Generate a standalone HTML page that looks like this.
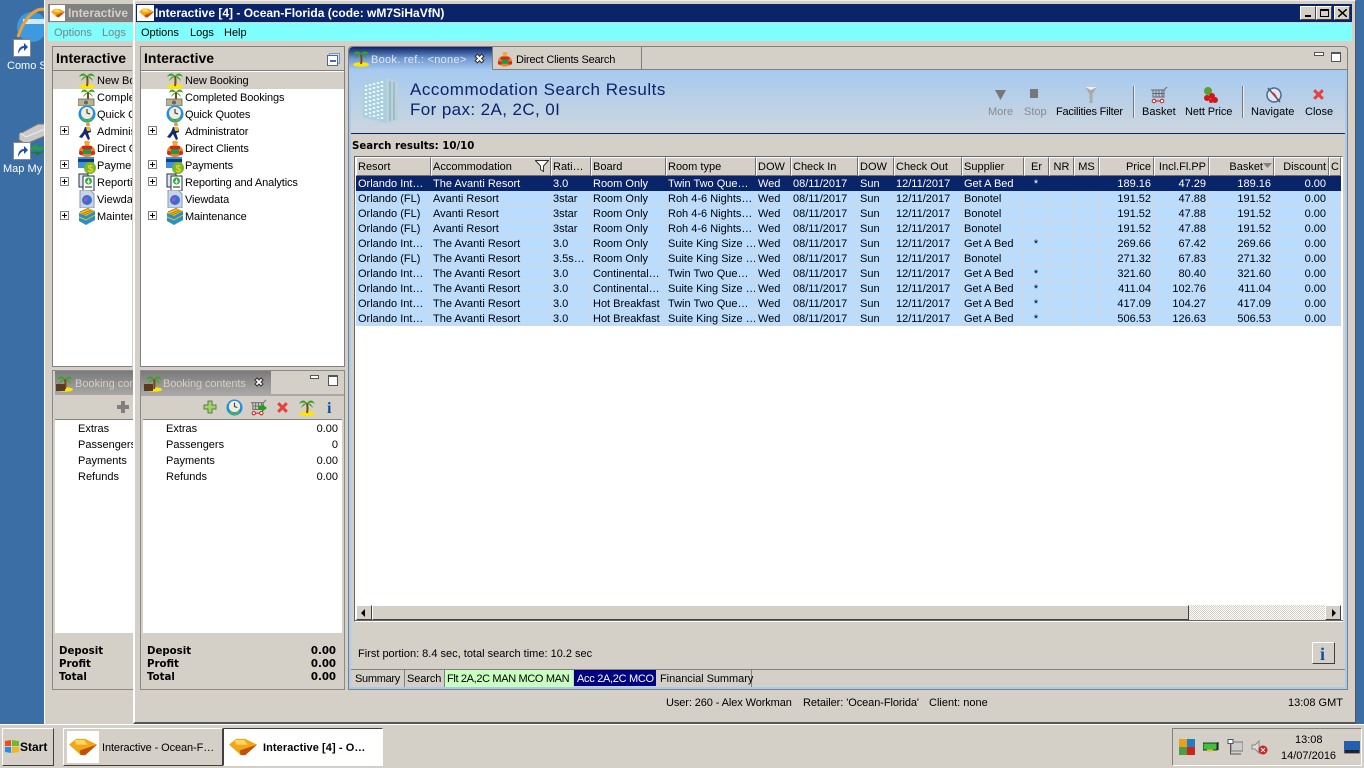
<!DOCTYPE html>
<html><head><meta charset="utf-8"><title>Interactive</title>
<style>
html,body{margin:0;padding:0;width:1364px;height:768px;overflow:hidden;background:#3a6ea5;font:11px "Liberation Sans",sans-serif;color:#000}
div,span,svg{position:absolute}
.t{white-space:nowrap;line-height:14px}
.g{background:#d4d0c8}
.raised{background:#d4d0c8;border:1px solid;border-color:#fff #404040 #404040 #fff;box-sizing:border-box}
table{position:absolute;left:356px;top:157px;border-collapse:separate;border-spacing:0;table-layout:fixed;width:985px;font:11px "Liberation Sans",sans-serif}
th{height:19px;box-sizing:border-box;background:#d4d0c8;border:1px solid;border-color:#fff #6f6f6f #6f6f6f #fff;font-weight:normal;text-align:left;padding:1px 1px 0;white-space:nowrap;overflow:hidden}
td{height:15px;box-sizing:border-box;padding:2px 2px 0;background:#b9dcff;border-right:1px solid #d4d6d8;border-bottom:1px solid #d4d6d8;white-space:nowrap;overflow:hidden;line-height:12px}
tr.s td{background:#0a246a;color:#fff;border-color:#0a246a}
.r{text-align:right;padding-right:2px}
.c{text-align:center}
.b{font-family:"DejaVu Sans",sans-serif;font-weight:bold;font-size:10.2px}
.tr{letter-spacing:-.12px}
</style></head><body>
<svg width="0" height="0" style="left:0;top:0"><defs>
<symbol id="palm" viewBox="0 0 18 18"><ellipse cx="9" cy="15.5" rx="8" ry="2.3" fill="#ffe600"/><path d="M9 15C10 11 9.500 8 9 5" stroke="#7a4a10" stroke-width="2" fill="none"/><path d="M9 5C6 1 3 2 1 6 4 4 6 5 9 5ZM9 5C12 1 15 2 17 6 14 4 12 5 9 5ZM9 5C6 5 4 7 3 10 5 8 7 7 9 5ZM9 5C12 5 14 7 15 10 13 8 11 7 9 5Z" fill="#3fa02c"/></symbol>
<symbol id="cash" viewBox="0 0 18 18"><path d="M10 11C10 8 10 6 10 4" stroke="#7a4a10" stroke-width="2"/><path d="M10 4C7 0 4 1 3 5 5 3 7 4 10 4ZM10 4C13 0 16 1 17 5 15 3 13 4 10 4ZM10 4C8 5 6 6 5 9 7 7 9 6 10 4ZM10 4C12 5 14 6 15 9 13 7 11 6 10 4Z" fill="#3fa02c"/><rect x="0" y="11" width="16" height="7" fill="#b9b48e" stroke="#555" stroke-width=".7"/><circle cx="8" cy="14.500" r="2" fill="#666"/></symbol>
<symbol id="clock" viewBox="0 0 18 18"><circle cx="9" cy="9" r="8.500" fill="#1d8ee0"/><circle cx="9" cy="8" r="6" fill="#f1ece0"/><path d="M9 4V8L12 9" stroke="#444" stroke-width="1.200" fill="none"/><path d="M3 13C6 18 12 18 15 13L12 13 9 16 6 13Z" fill="#58b82c"/></symbol>
<symbol id="run" viewBox="0 0 18 18"><circle cx="10" cy="2.500" r="2" fill="#d9a05b"/><path d="M7 5H12L13 10 10 11 12 17 10 18 7 12 4 16 1 15 5 10Z" fill="#14266e"/><path d="M8 5H12L12 9H9Z" fill="#e8c020"/></symbol>
<symbol id="clown" viewBox="0 0 18 18"><path d="M6 4C6 1 12 1 12 4Z" fill="#f0a020"/><circle cx="9" cy="4.500" r="2.500" fill="#f4a83a"/><ellipse cx="9" cy="12" rx="8" ry="6" fill="#f08020"/><rect x="5" y="8" width="8" height="7" fill="#1c9c40"/><rect x="4" y="7" width="10" height="3" fill="#e02020"/><circle cx="3" cy="14" r="2" fill="#e02020"/><circle cx="15" cy="14" r="2" fill="#e02020"/></symbol>
<symbol id="card" viewBox="0 0 18 18"><rect x="0" y="1" width="16" height="11" fill="#3f8fdc"/><rect x="0" y="3" width="16" height="3" fill="#123c7c"/><circle cx="12" cy="12" r="6" fill="#79b82c"/><text x="9.500" y="16" font-family="Liberation Sans" font-weight="bold" font-size="10" fill="#f0d020">$</text></symbol>
<symbol id="report" viewBox="0 0 18 18"><rect x="1" y="1" width="9" height="13" fill="#dfe6ec" stroke="#234" stroke-width="1"/><rect x="5" y="3" width="11" height="15" fill="#fff" stroke="#234" stroke-width="1"/><circle cx="10.500" cy="8" r="3.500" fill="#2fb12f"/><path d="M10.500 6V9M9 8L10.500 10 12 8" stroke="#fff" fill="none"/><path d="M7 14H14" stroke="#222"/></symbol>
<symbol id="view" viewBox="0 0 18 18"><path d="M2 0H12L16 4V18H2Z" fill="#c9d4e6" stroke="#8c97ad"/><circle cx="9" cy="10" r="5" fill="#3a6cd4"/><path d="M6 8L10 7 9 11 6 12Z" fill="#9b5bc2"/></symbol>
<symbol id="maint" viewBox="0 0 18 18"><path d="M1 6L10 1 17 4V13L8 18 1 14Z" fill="#2a90c8"/><path d="M1 6L10 1 17 4 8 9Z" fill="#f0c020"/><path d="M2 5L11 1M4 7L13 3M6 8L15 4" stroke="#a87010" stroke-width=".8"/><path d="M1 10L8 13 17 8" stroke="#f0c020" fill="none"/></symbol>
<symbol id="logo" viewBox="0 0 24 16"><path d="M0 6L6 1H14L24 6 14 15H10Z" fill="#f0a818"/><path d="M5 2H13L16 6H6Z" fill="#fcd860"/><path d="M9 11L24 6 14 15H10Z" fill="#c0500f"/></symbol>
<symbol id="x" viewBox="0 0 14 14"><path d="M2 4L4 2 7 5 10 2 12 4 9 7 12 10 10 12 7 9 4 12 2 10 5 7Z" fill="#e84040"/></symbol>
<symbol id="plus" viewBox="0 0 14 14"><path d="M5 1H9V5H13V9H9V13H5V9H1V5H5Z" fill="#a8d060" stroke="#508050" stroke-width="1"/></symbol>
<symbol id="pm" viewBox="0 0 9 9"><rect x=".5" y=".5" width="8" height="8" fill="#fff" stroke="#808080"/><path d="M2 4.500H7M4.500 2V7" stroke="#000"/></symbol>
<symbol id="basket" viewBox="0 0 18 18"><path d="M1 4H14L17 1M3 4V11H14V4M6 4V11M9 4V11M12 4V11M3 7.500H14" stroke="#666" fill="none"/><circle cx="4" cy="15" r="1.800" fill="#fff" stroke="#d01818"/><circle cx="12" cy="15" r="1.800" fill="#fff" stroke="#d01818"/><path d="M5.800 15H10.200" stroke="#d01818"/></symbol>
</defs></svg>

<!-- Desktop icons -->
<svg style="left:14px;top:6px" width="31" height="36" viewBox="0 0 31 36"><circle cx="18" cy="21" r="15" fill="#3d9ae0"/><path d="M9 18H30V13H9Z" fill="#cfe8fa"/><path d="M4 31C10 12 22 0 32 4" stroke="#f0a030" stroke-width="3" fill="none"/></svg>
<div style="left:13px;top:39px;width:16px;height:16px;background:#fff;border:1px solid #888"><svg style="left:1px;top:1px" width="14" height="14" viewBox="0 0 14 14"><path d="M3 13C3 7 6 5 9 5V2L13 6 9 10V7C7 7 5 9 3 13Z" fill="#1f4fa8"/></svg></div>
<div class="t" style="left:7px;top:59px;color:#fff">Como S</div>
<svg style="left:18px;top:122px" width="27" height="24" viewBox="0 0 27 24"><path d="M1 12L20 2H27V14L8 22 1 18Z" fill="#c9c9c9" stroke="#777"/><path d="M2 11L8 15 27 7" stroke="#eee" fill="none"/></svg>
<svg style="left:28px;top:144px" width="17" height="12" viewBox="0 0 17 12"><path d="M0 5L9 0V3H17V6H5Z" fill="#20a040"/><path d="M17 7L8 12V9H0V8H12Z" fill="#128030"/></svg>
<div style="left:13px;top:142px;width:16px;height:16px;background:#fff;border:1px solid #888"><svg style="left:1px;top:1px" width="14" height="14" viewBox="0 0 14 14"><path d="M3 13C3 7 6 5 9 5V2L13 6 9 10V7C7 7 5 9 3 13Z" fill="#1f4fa8"/></svg></div>
<div class="t" style="left:3px;top:162px;color:#fff">Map My</div>

<!-- Window A (behind) -->
<div class="g" style="left:44px;top:0;width:90px;height:724px;border-left:1px solid #fff;box-sizing:border-box;overflow:hidden">
  <div style="left:3px;top:4px;width:90px;height:18px;background:#808080"></div>
  <div style="left:3px;top:23px;width:90px;height:18px;background:#80ffff"></div>
  <div style="left:5px;top:5px;width:15px;height:16px;background:#fff"><svg style="left:1px;top:3px" width="14" height="10"><use href="#logo"/></svg></div>
  <div class="t" style="left:23px;top:6px;color:#d4d0c8;font-weight:bold;font-size:12px">Interactive</div>
  <div class="t" style="left:9px;top:26px;color:#808080">Options</div><div class="t" style="left:57px;top:26px;color:#808080">Logs</div>
</div>
<div style="left:52px;top:46px;width:80px;height:321px;overflow:hidden;background:#d4d0c8;border:solid #808080;border-width:1px 0 1px 1px;box-sizing:border-box">
  <div style="left:0;top:23px;width:80px;height:1px;background:#808080"></div>
  <div class="t" style="left:3px;top:4px;font-weight:bold;font-size:14px">Interactive</div>
  <div style="left:0;top:25px;width:80px;height:295px;background:#fff"></div>
  <div style="left:0;top:25px;width:80px;height:17px;background:#d4d0c8"></div>
  <svg style="left:25px;top:24px" width="18" height="18"><use href="#palm"/></svg><div class="t" style="left:44px;top:27px">New Booking</div>
  <svg style="left:25px;top:41px" width="18" height="18"><use href="#cash"/></svg><div class="t" style="left:44px;top:44px">Completed</div>
  <svg style="left:25px;top:58px" width="18" height="18"><use href="#clock"/></svg><div class="t" style="left:44px;top:61px">Quick Quotes</div>
  <svg style="left:7px;top:79px" width="9" height="9"><use href="#pm"/></svg><svg style="left:25px;top:75px" width="18" height="18"><use href="#run"/></svg><div class="t" style="left:44px;top:78px">Administrator</div>
  <svg style="left:25px;top:92px" width="18" height="18"><use href="#clown"/></svg><div class="t" style="left:44px;top:95px">Direct Clients</div>
  <svg style="left:7px;top:113px" width="9" height="9"><use href="#pm"/></svg><svg style="left:25px;top:109px" width="18" height="18"><use href="#card"/></svg><div class="t" style="left:44px;top:112px">Payments</div>
  <svg style="left:7px;top:130px" width="9" height="9"><use href="#pm"/></svg><svg style="left:25px;top:126px" width="18" height="18"><use href="#report"/></svg><div class="t" style="left:44px;top:129px">Reporting</div>
  <svg style="left:25px;top:143px" width="18" height="18"><use href="#view"/></svg><div class="t" style="left:44px;top:146px">Viewdata</div>
  <svg style="left:7px;top:164px" width="9" height="9"><use href="#pm"/></svg><svg style="left:25px;top:160px" width="18" height="18"><use href="#maint"/></svg><div class="t" style="left:44px;top:163px">Maintenance</div>
</div>
<div style="left:53px;top:371px;width:80px;height:318px;overflow:hidden;background:#d4d0c8;border-left:2px solid #d4d0c8;box-shadow:0 0 0 1px #8a8a8a;box-sizing:border-box">
  <div style="left:-2px;top:0;width:84px;height:24px;background:linear-gradient(#7a7a7a,#aaa8a6)"></div>
  <svg style="left:1px;top:3px" width="18" height="18"><use href="#palm"/></svg><div style="left:1px;top:13px;width:9px;height:7px;background:#5a3a20"></div>
  <div class="t" style="left:20px;top:6px;color:#d4d0c8">Booking contents</div>
  <svg style="left:61px;top:29px" width="14" height="14" viewBox="0 0 14 14"><path d="M5 1H9V5H13V9H9V13H5V9H1V5H5Z" fill="#808080"/></svg>
  <div style="left:0;top:48px;width:80px;height:1px;background:#808080"></div>
  <div style="left:0;top:49px;width:80px;height:213px;background:#fff"></div>
  <div class="t" style="left:23px;top:51px">Extras</div><div class="t" style="left:23px;top:67px">Passengers</div><div class="t" style="left:23px;top:83px">Payments</div><div class="t" style="left:23px;top:99px">Refunds</div>
  <div class="t b" style="left:4px;top:274px">Deposit</div><div class="t b" style="left:4px;top:287px">Profit</div><div class="t b" style="left:4px;top:300px">Total</div>
</div>

<!-- Window B -->
<div class="g" style="left:133px;top:0;width:1223px;height:724px;border-left:2px solid #fff;border-top:1px solid #eee;border-right:1px solid #555;border-bottom:2px solid #555;box-sizing:border-box"></div>
<div style="left:136px;top:4px;width:1216px;height:18px;background:#0a246a"></div>
<div style="left:136px;top:23px;width:1216px;height:18px;background:#80ffff"></div>
<div style="left:137px;top:5px;width:17px;height:16px;background:#fff"><svg style="left:2px;top:3px" width="15" height="10"><use href="#logo"/></svg></div>
<div class="t" style="left:155px;top:6px;color:#fff;font-size:12px;font-weight:bold">Interactive [4] - Ocean-Florida (code: wM7SiHaVfN)</div>
<div class="raised" style="left:1300px;top:6px;width:16px;height:14px"><div style="left:4px;top:8px;width:6px;height:2px;background:#000"></div></div>
<div class="raised" style="left:1316px;top:6px;width:16px;height:14px"><div style="left:3px;top:2px;width:9px;height:8px;border:1px solid #000;border-top-width:2px;box-sizing:border-box"></div></div>
<div class="raised" style="left:1334px;top:6px;width:16px;height:14px"><svg style="left:3px;top:2px" width="9" height="8" viewBox="0 0 9 8"><path d="M0 0L9 8M9 0L0 8" stroke="#000" stroke-width="1.500"/></svg></div>
<div class="t" style="left:141px;top:26px">Options</div><div class="t" style="left:190px;top:26px">Logs</div><div class="t" style="left:224px;top:26px">Help</div>

<!-- Tree panel B -->
<div style="left:140px;top:46px;width:205px;height:321px;background:#fff;border:1px solid #808080;box-sizing:border-box">
  <div class="g" style="left:0;top:0;width:203px;height:23px;border-bottom:1px solid #808080"></div>
  <div class="t" style="left:3px;top:4px;font-weight:bold;font-size:14px">Interactive</div>
  <svg style="left:186px;top:6px" width="13" height="13" viewBox="0 0 13 13"><rect x="2.500" y=".5" width="10" height="10" fill="#d4e4f4" stroke="#7a94b8"/><rect x=".5" y="2.500" width="10" height="10" fill="#fff" stroke="#4a6a9c"/><path d="M3 8H9" stroke="#1a3a7c" stroke-width="1.500"/></svg>
  <div class="g" style="left:0;top:25px;width:203px;height:17px"></div>
  <svg style="left:25px;top:24px" width="18" height="18"><use href="#palm"/></svg><div class="t tr" style="left:44px;top:27px">New Booking</div>
  <svg style="left:25px;top:41px" width="18" height="18"><use href="#cash"/></svg><div class="t tr" style="left:44px;top:44px">Completed Bookings</div>
  <svg style="left:25px;top:58px" width="18" height="18"><use href="#clock"/></svg><div class="t tr" style="left:44px;top:61px">Quick Quotes</div>
  <svg style="left:7px;top:79px" width="9" height="9"><use href="#pm"/></svg><svg style="left:25px;top:75px" width="18" height="18"><use href="#run"/></svg><div class="t tr" style="left:44px;top:78px">Administrator</div>
  <svg style="left:25px;top:92px" width="18" height="18"><use href="#clown"/></svg><div class="t tr" style="left:44px;top:95px">Direct Clients</div>
  <svg style="left:7px;top:113px" width="9" height="9"><use href="#pm"/></svg><svg style="left:25px;top:109px" width="18" height="18"><use href="#card"/></svg><div class="t tr" style="left:44px;top:112px">Payments</div>
  <svg style="left:7px;top:130px" width="9" height="9"><use href="#pm"/></svg><svg style="left:25px;top:126px" width="18" height="18"><use href="#report"/></svg><div class="t tr" style="left:44px;top:129px">Reporting and Analytics</div>
  <svg style="left:25px;top:143px" width="18" height="18"><use href="#view"/></svg><div class="t tr" style="left:44px;top:146px">Viewdata</div>
  <svg style="left:7px;top:164px" width="9" height="9"><use href="#pm"/></svg><svg style="left:25px;top:160px" width="18" height="18"><use href="#maint"/></svg><div class="t tr" style="left:44px;top:163px">Maintenance</div>
</div>

<!-- Booking panel B -->
<div style="left:141px;top:371px;width:203px;height:318px;background:#d4d0c8;border:solid #d4d0c8;border-width:0 2px;box-shadow:0 0 0 1px #8a8a8a;box-sizing:border-box">
  <div style="left:-2px;top:0;width:130px;height:23px;background:linear-gradient(#7a7a7a,#aaa8a6)"></div>
  <div style="left:-2px;top:23px;width:203px;height:2px;background:#aaa8a6"></div>
  <svg style="left:2px;top:3px" width="18" height="18"><use href="#palm"/></svg><div style="left:1px;top:13px;width:9px;height:7px;background:#5a3a20"></div>
  <div class="t" style="left:20px;top:6px;color:#d4d0c8;letter-spacing:-.1px">Booking contents</div>
  <svg style="left:110px;top:5px" width="12" height="12" viewBox="0 0 12 12"><path d="M2 4L4 2 6 4 8 2 10 4 8 6 10 8 8 10 6 8 4 10 2 8 4 6Z" fill="#fff" stroke="#333"/></svg>
  <div style="left:167px;top:4px;width:7px;height:2px;background:#fff;border:1px solid #555"></div>
  <div style="left:185px;top:4px;width:8px;height:8px;background:#fff;border:1px solid #555;border-top-width:2px"></div>
  <svg style="left:60px;top:29px" width="14" height="14"><use href="#plus"/></svg>
  <svg style="left:83px;top:28px" width="17" height="17"><use href="#clock"/></svg>
  <svg style="left:107px;top:28px" width="17" height="17"><use href="#basket"/></svg><svg style="left:115px;top:33px" width="9" height="8" viewBox="0 0 9 8"><path d="M0 2H4V0L9 4 4 8V6H0Z" fill="#20a020"/></svg>
  <svg style="left:132px;top:29px" width="15" height="15"><use href="#x"/></svg>
  <svg style="left:155px;top:27px" width="18" height="18"><use href="#palm"/></svg>
  <div class="t" style="left:184px;top:29px;color:#1050a0;font:bold 16px 'Liberation Serif',serif">i</div>
  <div style="left:0;top:48px;width:199px;height:1px;background:#808080"></div>
  <div style="left:0;top:49px;width:199px;height:213px;background:#fff"></div>
  <div class="t" style="left:23px;top:51px">Extras</div><div class="t" style="left:23px;top:67px">Passengers</div><div class="t" style="left:23px;top:83px">Payments</div><div class="t" style="left:23px;top:99px">Refunds</div>
  <div class="t" style="right:4px;top:51px">0.00</div><div class="t" style="right:4px;top:67px">0</div><div class="t" style="right:4px;top:83px">0.00</div><div class="t" style="right:4px;top:99px">0.00</div>
  <div class="t b" style="left:4px;top:274px">Deposit</div><div class="t b" style="left:4px;top:287px">Profit</div><div class="t b" style="left:4px;top:300px">Total</div>
  <div class="t b" style="right:6px;top:274px">0.00</div><div class="t b" style="right:6px;top:287px">0.00</div><div class="t b" style="right:6px;top:300px">0.00</div>
</div>

<!-- Main panel -->
<div style="left:348px;top:46px;width:1000px;height:644px;background:#d4d0c8;border:1px solid #808080;border-radius:4px 4px 0 0;box-sizing:border-box"></div>
<div style="left:349px;top:69px;width:998px;height:620px;border:solid #a6caf0;border-width:1px 2px 2px 2px;box-sizing:border-box"></div>
<div style="left:351px;top:70px;width:994px;height:63px;background:linear-gradient(#a6caf0,#cdd6de)"></div>
<div style="left:351px;top:133px;width:994px;height:1px;background:#0a246a"></div>
<div style="left:349px;top:47px;width:144px;height:23px;background:linear-gradient(#0a246a,#6f97cf 50%,#a6caf0);border-radius:4px 0 0 0"></div>
<div style="left:492px;top:47px;width:150px;height:23px;border:solid #808080;border-width:0 1px 1px 1px;box-sizing:border-box;background:#d4d0c8"></div>
<div style="left:642px;top:69px;width:705px;height:1px;background:#808080"></div>
<svg style="left:352px;top:49px" width="18" height="18"><use href="#palm"/></svg>
<div class="t" style="left:371px;top:53px;color:#dfe8f4;letter-spacing:.28px">Book. ref.: &lt;none&gt;</div>
<svg style="left:473px;top:52px" width="13" height="13" viewBox="0 0 12 12"><path d="M2 4L4 2 6 4 8 2 10 4 8 6 10 8 8 10 6 8 4 10 2 8 4 6Z" fill="#fff" stroke="#333"/></svg>
<svg style="left:497px;top:50px" width="16" height="17"><use href="#clown"/></svg>
<div class="t" style="left:516px;top:53px;letter-spacing:-.2px">Direct Clients Search</div>
<div style="left:1314px;top:52px;width:8px;height:2px;background:#fff;border:1px solid #555"></div>
<div style="left:1331px;top:52px;width:8px;height:7px;background:#fff;border:1px solid #555;border-top-width:2px"></div>

<svg style="left:362px;top:77px" width="37" height="47" viewBox="0 0 37 47"><path d="M1 7L24 1V46L1 40Z" fill="#a9cfe0"/><path d="M24 1L36 5V43L24 46Z" fill="#bcd2d6"/><path d="M4 8V39M8 7V40M12 6V41M16 5V42M20 4V43" stroke="#eaf6fb" stroke-width="2.500" stroke-dasharray="2 2"/><path d="M28 4V44M32 5V43" stroke="#8eb8c8" stroke-width="1.500"/></svg>
<div class="t" style="left:410px;top:80px;font-size:17px;line-height:20px;color:#0a246a;letter-spacing:.5px">Accommodation Search Results</div>
<div class="t" style="left:410px;top:100px;font-size:17px;line-height:20px;color:#0a246a;letter-spacing:.4px">For pax: 2A, 2C, 0I</div>

<svg style="left:994px;top:88px" width="13" height="13" viewBox="0 0 13 13"><path d="M1 2H12L6.500 12Z" fill="#777"/></svg>
<div style="left:1030px;top:89px;width:8px;height:9px;background:#777"></div>
<svg style="left:1084px;top:86px" width="14" height="18" viewBox="0 0 14 18"><path d="M1 1H13L8.500 8V17H5.500V8Z" fill="#aaa"/><path d="M1 1H13L7 4Z" fill="#eee"/></svg>
<svg style="left:1150px;top:86px" width="18" height="18"><use href="#basket"/></svg>
<svg style="left:1201px;top:86px" width="18" height="18" viewBox="0 0 18 18"><circle cx="7" cy="5" r="4" fill="#5aa030"/><circle cx="6" cy="12" r="3" fill="#d01818"/><circle cx="11" cy="10" r="3" fill="#d01818"/><circle cx="14" cy="14" r="3" fill="#d01818"/><circle cx="10" cy="15" r="2" fill="#d01818"/></svg>
<svg style="left:1265px;top:86px" width="18" height="18" viewBox="0 0 18 18"><circle cx="9" cy="9" r="7" fill="#dfe8f0" stroke="#4a6a9c" stroke-width="1.500"/><path d="M3 2L15 16" stroke="#555" stroke-width="1.500"/><path d="M8 7L11 11" stroke="#d03030" stroke-width="2"/></svg>
<svg style="left:1311px;top:87px" width="15" height="15"><use href="#x"/></svg>
<div class="t" style="left:988px;top:105px;color:#8a8a8a;width:24px;text-align:center">More</div>
<div class="t" style="left:1024px;top:105px;color:#8a8a8a">Stop</div>
<div class="t" style="left:1056px;top:105px;letter-spacing:-.2px">Facilities Filter</div>
<div class="t" style="left:1142px;top:105px">Basket</div>
<div class="t" style="left:1185px;top:105px;letter-spacing:-.1px">Nett Price</div>
<div class="t" style="left:1251px;top:105px">Navigate</div>
<div class="t" style="left:1305px;top:105px">Close</div>
<div style="left:1133px;top:86px;width:1px;height:32px;background:#777;border-right:1px solid #eee"></div>
<div style="left:1242px;top:86px;width:1px;height:32px;background:#777;border-right:1px solid #eee"></div>

<div class="t b" style="left:352px;top:140px">Search results: 10/10</div>

<!-- Grid -->
<div style="left:354px;top:156px;width:989px;height:466px;background:#fff;border:1px solid;border-color:#666 #fff #fff #666;box-sizing:border-box"></div>
<table>
<colgroup><col style="width:75px"><col style="width:120px"><col style="width:40px"><col style="width:75px"><col style="width:90px"><col style="width:35px"><col style="width:67px"><col style="width:36px"><col style="width:68px"><col style="width:62px"><col style="width:25px"><col style="width:25px"><col style="width:25px"><col style="width:55px"><col style="width:55px"><col style="width:65px"><col style="width:55px"><col style="width:12px"></colgroup>
<tr><th>Resort</th><th>Accommodation</th><th>Rati…</th><th>Board</th><th>Room type</th><th>DOW</th><th>Check In</th><th>DOW</th><th>Check Out</th><th>Supplier</th><th class="c">Er</th><th class="c">NR</th><th class="c">MS</th><th class="r">Price</th><th class="r">Incl.Fl.PP</th><th class="r" style="padding-right:10px">Basket</th><th class="r">Discount</th><th>C</th></tr>
<tr class="s"><td>Orlando Int…</td><td>The Avanti Resort</td><td>3.0</td><td>Room Only</td><td>Twin Two Que…</td><td>Wed</td><td>08/11/2017</td><td>Sun</td><td>12/11/2017</td><td>Get A Bed</td><td class="c">*</td><td></td><td></td><td class="r">189.16</td><td class="r">47.29</td><td class="r">189.16</td><td class="r">0.00</td><td></td></tr>
<tr><td>Orlando (FL)</td><td>Avanti Resort</td><td>3star</td><td>Room Only</td><td>Roh 4-6 Nights…</td><td>Wed</td><td>08/11/2017</td><td>Sun</td><td>12/11/2017</td><td>Bonotel</td><td></td><td></td><td></td><td class="r">191.52</td><td class="r">47.88</td><td class="r">191.52</td><td class="r">0.00</td><td></td></tr>
<tr><td>Orlando (FL)</td><td>Avanti Resort</td><td>3star</td><td>Room Only</td><td>Roh 4-6 Nights…</td><td>Wed</td><td>08/11/2017</td><td>Sun</td><td>12/11/2017</td><td>Bonotel</td><td></td><td></td><td></td><td class="r">191.52</td><td class="r">47.88</td><td class="r">191.52</td><td class="r">0.00</td><td></td></tr>
<tr><td>Orlando (FL)</td><td>Avanti Resort</td><td>3star</td><td>Room Only</td><td>Roh 4-6 Nights…</td><td>Wed</td><td>08/11/2017</td><td>Sun</td><td>12/11/2017</td><td>Bonotel</td><td></td><td></td><td></td><td class="r">191.52</td><td class="r">47.88</td><td class="r">191.52</td><td class="r">0.00</td><td></td></tr>
<tr><td>Orlando Int…</td><td>The Avanti Resort</td><td>3.0</td><td>Room Only</td><td>Suite King Size …</td><td>Wed</td><td>08/11/2017</td><td>Sun</td><td>12/11/2017</td><td>Get A Bed</td><td class="c">*</td><td></td><td></td><td class="r">269.66</td><td class="r">67.42</td><td class="r">269.66</td><td class="r">0.00</td><td></td></tr>
<tr><td>Orlando (FL)</td><td>The Avanti Resort</td><td>3.5s…</td><td>Room Only</td><td>Suite King Size …</td><td>Wed</td><td>08/11/2017</td><td>Sun</td><td>12/11/2017</td><td>Bonotel</td><td></td><td></td><td></td><td class="r">271.32</td><td class="r">67.83</td><td class="r">271.32</td><td class="r">0.00</td><td></td></tr>
<tr><td>Orlando Int…</td><td>The Avanti Resort</td><td>3.0</td><td>Continental…</td><td>Twin Two Que…</td><td>Wed</td><td>08/11/2017</td><td>Sun</td><td>12/11/2017</td><td>Get A Bed</td><td class="c">*</td><td></td><td></td><td class="r">321.60</td><td class="r">80.40</td><td class="r">321.60</td><td class="r">0.00</td><td></td></tr>
<tr><td>Orlando Int…</td><td>The Avanti Resort</td><td>3.0</td><td>Continental…</td><td>Suite King Size …</td><td>Wed</td><td>08/11/2017</td><td>Sun</td><td>12/11/2017</td><td>Get A Bed</td><td class="c">*</td><td></td><td></td><td class="r">411.04</td><td class="r">102.76</td><td class="r">411.04</td><td class="r">0.00</td><td></td></tr>
<tr><td>Orlando Int…</td><td>The Avanti Resort</td><td>3.0</td><td>Hot Breakfast</td><td>Twin Two Que…</td><td>Wed</td><td>08/11/2017</td><td>Sun</td><td>12/11/2017</td><td>Get A Bed</td><td class="c">*</td><td></td><td></td><td class="r">417.09</td><td class="r">104.27</td><td class="r">417.09</td><td class="r">0.00</td><td></td></tr>
<tr><td>Orlando Int…</td><td>The Avanti Resort</td><td>3.0</td><td>Hot Breakfast</td><td>Suite King Size …</td><td>Wed</td><td>08/11/2017</td><td>Sun</td><td>12/11/2017</td><td>Get A Bed</td><td class="c">*</td><td></td><td></td><td class="r">506.53</td><td class="r">126.63</td><td class="r">506.53</td><td class="r">0.00</td><td></td></tr>
</table>
<svg style="left:535px;top:160px" width="14" height="12" viewBox="0 0 14 12"><path d="M.5 .5H13.500L8.500 6V11.500L5.500 9.500V6Z" fill="#fff" stroke="#333"/></svg>
<svg style="left:1263px;top:163px" width="9" height="5" viewBox="0 0 9 5"><path d="M0 0H9L4.500 5Z" fill="#808080"/></svg>

<!-- Scrollbar -->
<div style="left:356px;top:605px;width:985px;height:15px;background:repeating-conic-gradient(#d4d0c8 0 25%,#fff 0 50%) 0 0/2px 2px"></div>
<div class="raised" style="left:356px;top:605px;width:16px;height:15px"><div style="left:4px;top:3px;width:0;height:0;border:4px solid transparent;border-right-color:#000;border-left:0"></div></div>
<div class="raised" style="left:372px;top:605px;width:817px;height:15px"></div>
<div class="raised" style="left:1325px;top:605px;width:16px;height:15px"><div style="left:6px;top:3px;width:0;height:0;border:4px solid transparent;border-left-color:#000;border-right:0"></div></div>
<div style="left:354px;top:620px;width:989px;height:1px;background:#666"></div>

<div class="t" style="left:358px;top:647px">First portion: 8.4 sec, total search time: 10.2 sec</div>
<div class="raised" style="left:1312px;top:642px;width:23px;height:22px;color:#1050a0"><div class="t" style="left:7px;top:1px;font:bold 18px 'Liberation Serif',serif;line-height:20px">i</div></div>

<div style="left:351px;top:669px;width:994px;height:1px;background:#808080"></div>
<div style="left:351px;top:670px;width:54px;height:17px;border-right:1px solid #808080;box-sizing:border-box"></div><div class="t" style="left:355px;top:672px;letter-spacing:-.3px">Summary</div>
<div style="left:405px;top:670px;width:40px;height:17px;border-right:1px solid #808080;box-sizing:border-box"></div><div class="t" style="left:407px;top:672px;letter-spacing:-.1px">Search</div>
<div style="left:445px;top:670px;width:128px;height:17px;background:#c8ffc0"></div><div class="t" style="left:447px;top:672px;letter-spacing:-.35px">Flt 2A,2C MAN MCO MAN</div>
<div style="left:574px;top:670px;width:82px;height:16px;background:#000080"></div><div class="t" style="left:577px;top:672px;color:#fff;letter-spacing:-.3px">Acc 2A,2C MCO</div>
<div style="left:657px;top:670px;width:95px;height:17px;border-right:1px solid #808080;box-sizing:border-box"></div><div class="t" style="left:660px;top:672px;letter-spacing:-.05px">Financial Summary</div>

<div class="t" style="left:666px;top:696px;letter-spacing:-.1px">User: 260 - Alex Workman</div>
<div class="t" style="left:803px;top:696px;letter-spacing:-.08px">Retailer: 'Ocean-Florida'</div>
<div class="t" style="left:929px;top:696px">Client: none</div>
<div class="t" style="right:21px;top:696px">13:08 GMT</div>

<!-- Taskbar -->
<div class="g" style="left:0;top:724px;width:1364px;height:44px;border-top:1px solid #fff;box-sizing:border-box"></div>
<div class="raised" style="left:2px;top:728px;width:52px;height:38px"></div>
<svg style="left:4px;top:739px" width="16" height="16" viewBox="0 0 16 16"><path d="M1 2L7 1V7H1Z" fill="#e8501c"/><path d="M8 1L15 2V7H8Z" fill="#70b82c"/><path d="M1 8H7V14L1 13Z" fill="#2c8ce0"/><path d="M8 8H15V13L8 14Z" fill="#f0b81c"/></svg>
<div class="t" style="left:20px;top:740px;font-weight:bold;font-size:12px">Start</div>
<div class="raised" style="left:63px;top:728px;width:160px;height:38px"></div>
<div style="left:67px;top:731px;width:32px;height:32px;background:#fff"></div>
<svg style="left:69px;top:737px" width="28" height="20"><use href="#logo"/></svg>
<div class="t" style="left:102px;top:741px;letter-spacing:-.1px">Interactive - Ocean-F…</div>
<div style="left:223px;top:728px;width:160px;height:38px;background:#fff;border:1px solid;border-color:#404040 #fff #fff #404040;box-sizing:border-box"></div>
<svg style="left:229px;top:737px" width="28" height="20"><use href="#logo"/></svg>
<div class="t" style="left:263px;top:741px;font-weight:bold;letter-spacing:.08px">Interactive [4] - O…</div>
<div style="left:1172px;top:728px;width:190px;height:38px;border:1px solid;border-color:#808080 #fff #fff #808080;box-sizing:border-box"></div>
<svg style="left:1179px;top:739px" width="16" height="16" viewBox="0 0 16 16"><rect width="8" height="8" fill="#e8a020"/><rect x="8" width="8" height="8" fill="#1c80c0"/><rect y="8" width="8" height="8" fill="#4aa040"/><rect x="8" y="8" width="8" height="8" fill="#d02020"/></svg>
<svg style="left:1203px;top:742px" width="16" height="10" viewBox="0 0 16 10"><rect width="14" height="7" y="1" fill="#40c040" stroke="#111" stroke-width=".8"/><path d="M15 0V8" stroke="#111"/><path d="M4 8.500H10" stroke="#e0c020" stroke-width="2"/></svg>
<svg style="left:1227px;top:739px" width="16" height="16" viewBox="0 0 16 16"><rect x="4" y="3" width="12" height="9" fill="#ccc" stroke="#777"/><rect x="1" y="0.500" width="5" height="4" fill="#fff" stroke="#555"/><path d="M3.500 4.500V15H14" stroke="#555" fill="none"/></svg>
<svg style="left:1251px;top:740px" width="17" height="15" viewBox="0 0 17 15"><path d="M1 5H4L8 1V13L4 9H1Z" fill="#ddd" stroke="#888"/><circle cx="12" cy="10" r="4.500" fill="#d02020"/><path d="M10 8L14 12M14 8L10 12" stroke="#fff"/></svg>
<div class="t" style="left:1295px;top:733px">13:08</div>
<div class="t" style="left:1281px;top:749px">14/07/2016</div>
<svg style="left:1344px;top:741px" width="16" height="13" viewBox="0 0 16 13"><rect width="16" height="12" fill="#1f60b0" stroke="#557"/><rect x="1" y="9" width="14" height="3" fill="#222"/></svg>
</body></html>
